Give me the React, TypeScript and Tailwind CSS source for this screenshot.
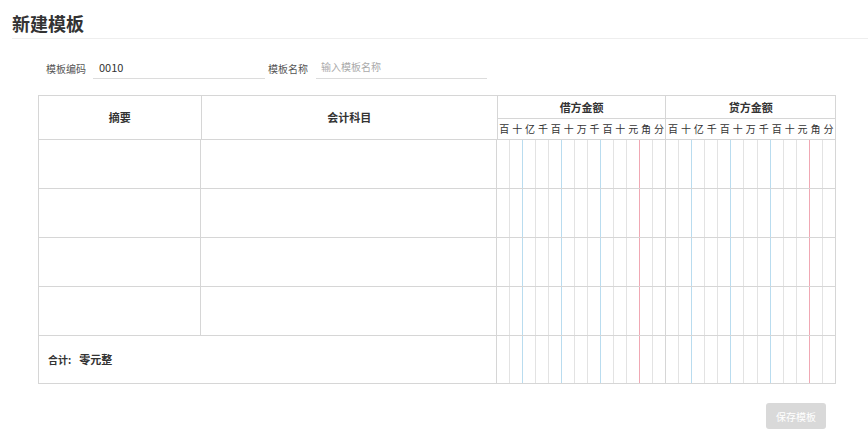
const digits = ["百","十","亿","千","百","十","万","千","百","十","元","角","分"];
const lineColor = (i: number) => i === 1 || i === 4 || i === 7 ? "border-r-[#b9dcef]" : i === 10 ? "border-r-[#f0a8b4]" : "border-r-[#e3e3e3]";

function Cells({ h }: { h: string }) {
  return (
    <div className={`flex ${h}`}>
      {[0, 1].map((s) => (
        <div key={s} className={`flex w-[169px] ${s === 0 ? "border-r border-r-[#d6d6d6]" : ""}`}>
          {digits.map((_, i) => (
            <div key={i} className={`flex-1 ${i < 12 ? "border-r " + lineColor(i) : ""}`} />
          ))}
        </div>
      ))}
    </div>
  );
}

export default function App() {
  return (
    <div className="w-[868px] h-[433px] bg-white overflow-hidden text-[#333]" style={{ fontFamily: '"Noto Sans CJK SC", "Noto Sans", sans-serif' }}>
      <div className="h-[38px] pl-[12px] pt-[10px] text-[18px] font-bold leading-[26px] text-[#333]">新建模板</div>
      <div className="ml-[12px] border-t border-[#eeeeee] pt-[18px] pl-[26px]">
        <div className="flex items-center text-[10px] h-[22px]">
          <span className="text-[#555] ml-[8px] w-[47px]">模板编码</span>
          <div className="w-[172px] h-[22px] border-b border-[#dcdcdc] pl-[6px] text-[#333] leading-[20px] text-[11px]">0010</div>
          <span className="text-[#555] ml-[3px] w-[48px]">模板名称</span>
          <div className="w-[171px] h-[22px] border-b border-[#dcdcdc] pl-[5px] text-[#aaa] leading-[20px]">输入模板名称</div>
        </div>
        <div className="mt-[16px] w-[798px] border border-[#d6d6d6] text-[11px]">
          <div className="flex h-[44px] border-b border-[#d6d6d6]">
            <div className="w-[163px] border-r border-[#d6d6d6] flex items-center justify-center font-bold">摘要</div>
            <div className="w-[297px] border-r border-[#d6d6d6] flex items-center justify-center font-bold">会计科目</div>
            {["借方金额", "贷方金额"].map((t, s) => (
              <div key={t} className={`w-[169px] flex flex-col ${s === 0 ? "border-r border-[#d6d6d6]" : ""}`}>
                <div className="h-[23px] border-b border-[#d6d6d6] flex items-center justify-center font-bold">{t}</div>
                <div className="flex-1 flex items-center">
                  {digits.map((d, i) => (
                    <div key={i} className="flex-1 text-center text-[10px] leading-none">{d}</div>
                  ))}
                </div>
              </div>
            ))}
          </div>
          {[0, 1, 2, 3].map((r) => (
            <div key={r} className="flex h-[49px] border-b border-[#d6d6d6]">
              <div className="w-[163px] border-r border-[#d6d6d6]" />
              <div className="w-[297px] border-r border-[#d6d6d6]" />
              <Cells h="h-full" />
            </div>
          ))}
          <div className="flex h-[47px]">
            <div className="w-[460px] border-r border-[#d6d6d6] flex items-center pl-[9px] font-bold text-[10px]">
              合计:<span className="ml-[8px] text-[11px]">零元整</span>
            </div>
            <Cells h="h-full" />
          </div>
        </div>
        <div className="w-[798px] flex justify-end mt-[19px] pr-[10px]">
          <div className="w-[60px] h-[26px] rounded-[3px] bg-[#d9d9d9] text-white text-[10px] flex items-center justify-center">保存模板</div>
        </div>
      </div>
    </div>
  );
}
